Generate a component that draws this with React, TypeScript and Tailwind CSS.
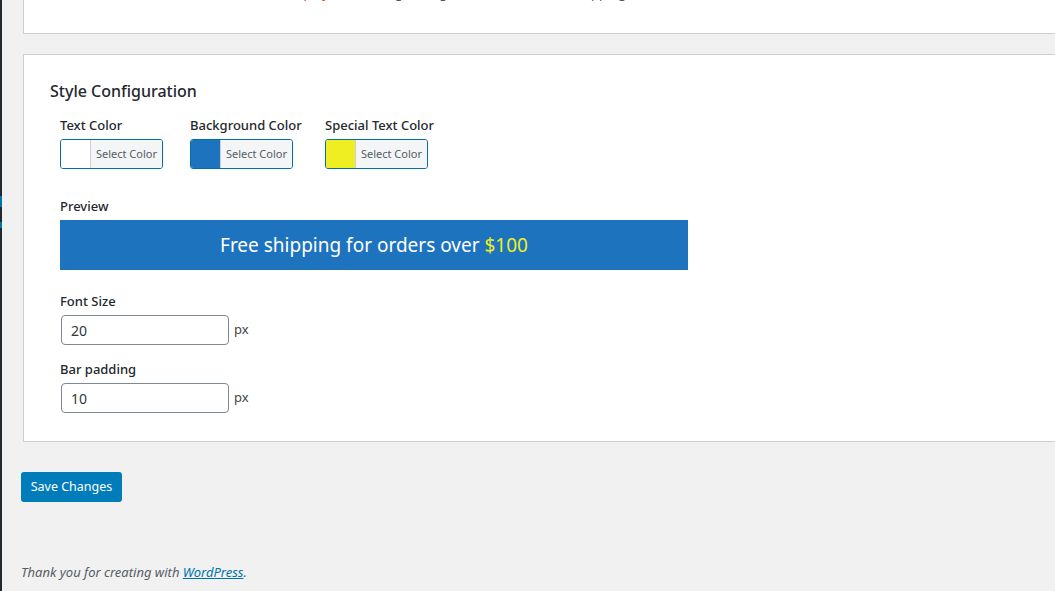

const FONT = { fontFamily: '"Noto Sans", "Open Sans", sans-serif' }

function ColorPicker({ label, color, width }: { label: string; color: string; width: string }) {
  return (
    <div className={`flex flex-col ${width}`}>
      <span className="text-[13px] font-medium leading-[18px] text-[#23282d]">{label}</span>
      <div className="mt-[5px] flex h-[30px] w-[103px] overflow-hidden rounded-[3px] border border-[#0071a1]">
        <span className={`w-[30px] border-r border-[#ccd0d4] ${color}`} />
        <span className="flex flex-1 items-center justify-center bg-[#f3f5f6] text-[11px] text-[#555d66]">
          Select Color
        </span>
      </div>
    </div>
  )
}

function NumberField({ label, value }: { label: string; value: string }) {
  return (
    <div className="flex flex-col">
      <span className="text-[13px] font-medium leading-[18px] text-[#23282d]">{label}</span>
      <div className="mt-[5px] flex items-center">
        <input
          defaultValue={value}
          className="ml-px h-[30px] w-[168px] rounded-[4px] border border-[#7e8993] px-[9px] text-[14px] text-[#32373c] outline-none"
        />
        <span className="ml-[5px] text-[13px] text-[#444]">px</span>
      </div>
    </div>
  )
}

export default function App() {
  return (
    <div className="flex min-h-screen bg-[#f1f1f1]" style={FONT}>
      <div className="flex w-[2px] flex-col bg-[#23282d]">
        <div className="h-[196px]" />
        <div className="h-[11px] bg-[#0073aa]" />
        <div className="h-[15px]" />
        <div className="h-[6px] bg-[#0073aa]" />
      </div>
      <div className="flex-1 overflow-hidden pl-[19px]">
        <div className="-mt-[14px] ml-[2px] mr-[-10px] h-[48px] border border-t-0 border-[#ccd0d4] bg-white">
          <p className="pl-[262px] text-[13px] leading-[14px] text-[#555]">
            <span className="text-[#d54e21]">display</span> the message using the shortcode [free_shipping_bar]
          </p>
        </div>

        <div className="ml-[2px] mr-[-10px] mt-[20px] border border-[#ccd0d4] bg-white pb-[28px] pl-[26px] pt-[24px]">
          <h2 className="text-[16px] font-medium leading-[24px] text-[#23282d]">Style Configuration</h2>

          <div className="mt-[13px] flex pl-[10px]">
            <ColorPicker label="Text Color" color="bg-white" width="w-[130px]" />
            <ColorPicker label="Background Color" color="bg-[#1e73be]" width="w-[135px]" />
            <ColorPicker label="Special Text Color" color="bg-[#eeee22]" width="w-[135px]" />
          </div>

          <div className="mt-[24px] pl-[10px]">
            <span className="text-[13px] font-medium leading-[18px] text-[#23282d]">Preview</span>
            <div className="mt-[3px] flex h-[50px] w-[628px] items-center justify-center bg-[#1e73be] text-[19px] text-white">
              <span>
                Free shipping for orders over <span className="text-[#eeee22]">$100</span>
              </span>
            </div>
          </div>

          <div className="mt-[22px] flex flex-col gap-[15px] pl-[10px]">
            <NumberField label="Font Size" value="20" />
            <NumberField label="Bar padding" value="10" />
          </div>
        </div>

        <button className="mt-[30px] h-[30px] w-[101px] rounded-[3px] bg-[#007cba] text-[12.5px] text-white">
          Save Changes
        </button>

        <p className="mt-[61px] text-[13px] italic text-[#555d66]">
          Thank you for creating with{" "}
          <a href="#" className="text-[#0073aa] underline">
            WordPress
          </a>
          .
        </p>
      </div>
    </div>
  )
}
